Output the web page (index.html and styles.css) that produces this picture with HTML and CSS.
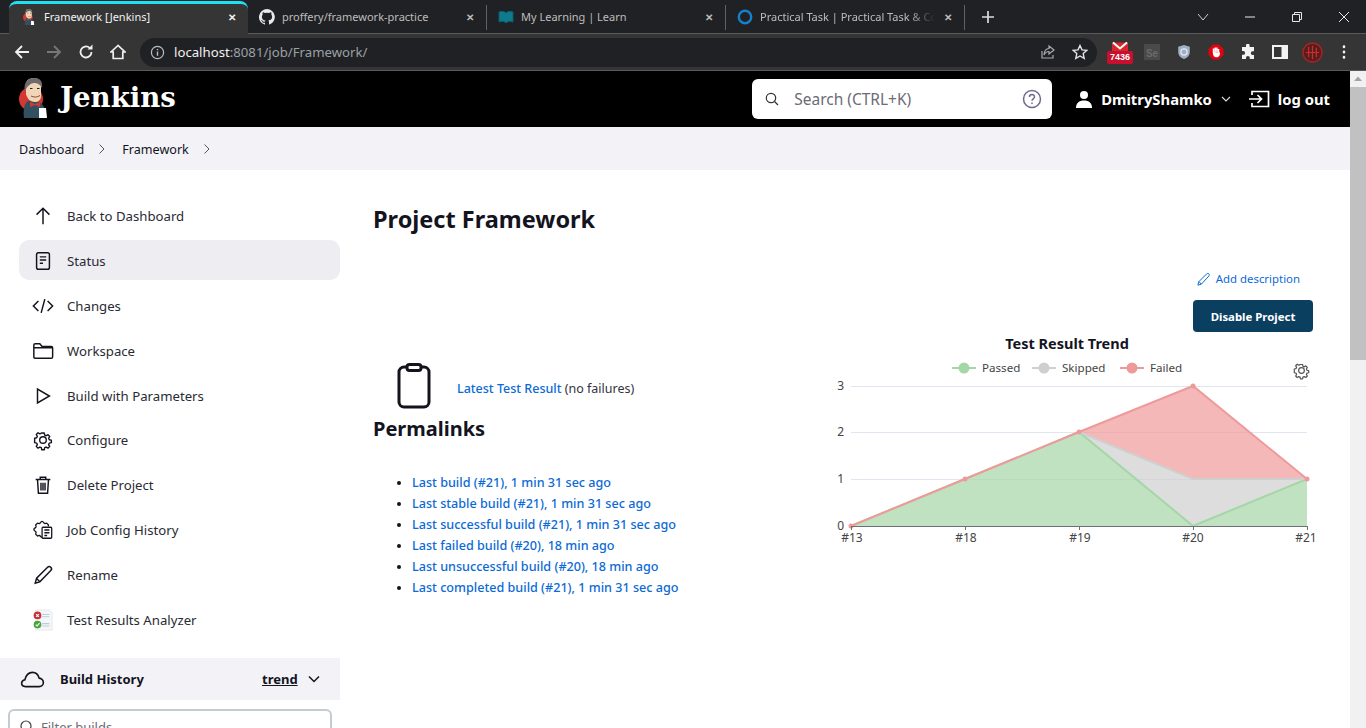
FILE: index.html
```html
<!DOCTYPE html>
<html lang="en">
<head>
    <meta charset="UTF-8">
    <meta name="viewport" content="width=device-width, initial-scale=1.0">
    <title>Framework [Jenkins]</title>
    <link rel="stylesheet" href="styles.css">
</head>
<body>
    <svg class="defs" width="0" height="0">
        <symbol id="butler" viewBox="0 0 30 40">
            <circle cx="12" cy="21" r="12" fill="#d33833"/>
            <path d="M5 40c-1-8 0-14 4-17l11 1c4 2 6 6 6 10l-4 2v4z" fill="#335061"/>
            <path d="M7 6c0-4 4-6 8-6s8 3 7 10v8c0 4-3 6-6 6-4 0-8-3-9-8z" fill="#f0d6b7"/>
            <path d="M6 13C4 5 9 0 15 0s9 3 8 10c-2-4-5-5-8-5S8 8 6 13z" fill="#6d6b6d"/>
            <path d="M11 10.500h2.500M18 10.500h2.500" stroke="#222" stroke-width="1.200"/>
            <path d="M12 18c3 1.500 6 1.500 9-.5" stroke="#8a4a3a" stroke-width="1" fill="none"/>
            <path d="M11 24l5 2 5-2v5l-5-2-5 2z" fill="#d33833"/>
            <path d="M20 30h7l1 10h-8z" fill="#fff"/>
        </symbol>
        <symbol id="gear" viewBox="0 0 24 24">
            <path d="M10.300 2.500h3.400l.6 2.800 2 .9 2.500-1.500 2.400 2.400-1.500 2.500.9 2 2.800.6v3.400l-2.800.6-.9 2 1.500 2.500-2.400 2.400-2.500-1.500-2 .9-.6 2.800h-3.400l-.6-2.800-2-.9-2.500 1.500-2.400-2.400 1.500-2.500-.9-2-2.800-.6V9.600l2.800-.6.9-2-1.500-2.500 2.400-2.400 2.500 1.500 2-.9z" transform="translate(2.400 2.400) scale(.8)" fill="none" stroke="currentColor" stroke-width="1.900" stroke-linejoin="round"/>
            <circle cx="12" cy="12" r="3.600" fill="none" stroke="currentColor" stroke-width="1.500"/>
        </symbol>
    </svg>

    <div class="tabstrip">
        <div class="tab tab-active">
            <svg class="favicon"><use href="#butler"/></svg>
            <span class="tab-title">Framework [Jenkins]</span>
            <span class="tab-close">&#10005;</span>
        </div>
        <div class="tab tab-sep">
            <svg class="favicon" viewBox="0 0 16 16"><path fill="#e8e8e8" d="M8 0a8 8 0 0 0-2.500 15.600c.4.1.5-.2.5-.4v-1.400c-2.200.5-2.700-1-2.700-1-.4-.9-.9-1.200-.9-1.200-.7-.5.1-.5.1-.5.8.1 1.200.8 1.200.8.7 1.200 1.900.9 2.300.7.1-.5.3-.9.5-1.100-1.800-.2-3.600-.9-3.600-4 0-.9.3-1.600.8-2.100-.1-.2-.4-1 .1-2.100 0 0 .7-.2 2.200.8a7.600 7.600 0 0 1 4 0c1.500-1 2.200-.8 2.200-.8.400 1.100.2 1.900.1 2.100.5.6.8 1.300.8 2.100 0 3.100-1.900 3.700-3.700 3.900.3.300.6.800.6 1.500v2.200c0 .2.100.5.600.4A8 8 0 0 0 8 0z"/></svg>
            <span class="tab-title">proffery/framework-practice</span>
            <span class="tab-close">&#10005;</span>
        </div>
        <div class="tab tab-sep">
            <svg class="favicon" viewBox="0 0 16 16"><path fill="#0e7a8c" stroke="#0b5f6e" d="M1 3c3-1 5-1 7 1 2-2 4-2 7-1v10c-3-1-5-1-7 1-2-2-4-2-7-1z"/></svg>
            <span class="tab-title">My Learning | Learn</span>
            <span class="tab-close">&#10005;</span>
        </div>
        <div class="tab tab-sep">
            <svg class="favicon" viewBox="0 0 16 16"><circle cx="8" cy="8" r="6.200" fill="none" stroke="#1680c8" stroke-width="2.400"/></svg>
            <span class="tab-title tab-fade">Practical Task | Practical Task &amp; Co</span>
            <span class="tab-close">&#10005;</span>
        </div>
        <svg class="new-tab" viewBox="0 0 14 14"><path d="M7 1v12M1 7h12" stroke="#dcdcdc" stroke-width="1.700"/></svg>
        <div class="win-controls">
            <svg viewBox="0 0 14 14"><path d="M2 4l5 6 5-6" fill="none" stroke="#cfcfcf"/></svg>
            <svg viewBox="0 0 14 14"><path d="M2 7h10" stroke="#e8e8e8"/></svg>
            <svg viewBox="0 0 14 14"><path d="M2.500 4.500h7v7h-7zM4.500 4.500v-2h7v7h-2" fill="none" stroke="#e8e8e8"/></svg>
            <svg viewBox="0 0 14 14"><path d="M2 2l10 10M12 2L2 12" stroke="#e8e8e8"/></svg>
        </div>
    </div>

    <div class="toolbar">
        <svg class="nav-icon" viewBox="0 0 16 16"><path d="M15 8H2M8 2L2 8l6 6" fill="none" stroke="#f0f0f0" stroke-width="1.800"/></svg>
        <svg class="nav-icon" viewBox="0 0 16 16"><path d="M1 8h13M8 2l6 6-6 6" fill="none" stroke="#777" stroke-width="1.800"/></svg>
        <svg class="nav-icon" viewBox="0 0 16 16"><path d="M13.500 8A5.500 5.500 0 1 1 11.700 3.900" fill="none" stroke="#f0f0f0" stroke-width="1.800"/><path d="M9.500 5.500h5v-5z" fill="#f0f0f0"/></svg>
        <svg class="nav-icon" viewBox="0 0 16 16"><path d="M8 1.500L1 8h2.200v6.500h9.600V8H15z" fill="none" stroke="#f0f0f0" stroke-width="1.700"/></svg>
        <div class="omnibox">
            <svg class="omni-info" viewBox="0 0 16 16"><circle cx="8" cy="8" r="6.500" fill="none" stroke="#bbb" stroke-width="1.300"/><path d="M8 7v4.500M8 4.300v1.400" stroke="#bbb" stroke-width="1.500"/></svg>
            <span class="url"><span class="url-host">localhost</span>:8081/job/Framework/</span>
            <svg class="omni-icon" viewBox="0 0 16 16"><path d="M2 7v7h11v-3M9 2l5 4-5 4V7.500C6 7.500 5 9 4 11c0-4 2-6.500 5-6.500z" fill="none" stroke="#aaa" stroke-width="1.200"/></svg>
            <svg class="omni-icon" viewBox="0 0 16 16"><path d="M8 1.500l2 4.400 4.700.5-3.500 3.200 1 4.700L8 12l-4.200 2.300 1-4.700-3.500-3.200 4.700-.5z" fill="none" stroke="#e4e4e4" stroke-width="1.400"/></svg>
        </div>
        <div class="extensions">
            <div class="ext ext-gmail">
                <svg viewBox="0 0 16 11"><path d="M0 0h16v11H0z" fill="#d8262c"/><path d="M1 0l7 6 7-6" fill="none" stroke="#fff" stroke-width="2"/></svg>
                <span class="gmail-count">7436</span>
            </div>
            <div class="ext"><span class="ext-se">Se</span></div>
            <div class="ext"><svg viewBox="0 0 16 18"><path d="M8 1l6.500 2v6c0 4-3 6.500-6.500 8-3.500-1.500-6.500-4-6.500-8V3z" fill="#9fb0c6"/><circle cx="8" cy="9" r="3.500" fill="none" stroke="#e4e9f0" stroke-width="1.400"/></svg></div>
            <div class="ext"><svg viewBox="0 0 16 16"><path d="M5 .5h6L15.500 5v6L11 15.500H5L.5 11V5z" fill="#e3000f"/><path d="M5.500 8V4.500M7.200 8V3.500M8.900 8V3.500M10.500 8.500V5M5.500 8c0 3 1.200 4.500 3 4.500s2.800-1.500 2.800-4" stroke="#fff" stroke-width="1.500" fill="#fff"/></svg></div>
            <div class="ext"><svg viewBox="0 0 16 16"><path d="M6 1.500a1.800 1.800 0 0 1 3.600 0V3H14v4.200h-1.300a1.900 1.900 0 0 0 0 3.800H14v4H9.800v-1.200a1.900 1.900 0 0 0-3.800 0V15H2v-4.200h1.200a1.900 1.900 0 0 0 0-3.800H2V3h4z" fill="#f2f2f2"/></svg></div>
            <div class="ext"><svg viewBox="0 0 16 16"><path d="M1 2h14v12H1z" fill="none" stroke="#f2f2f2" stroke-width="2"/><path d="M9.500 2H15v12H9.500z" fill="#f2f2f2"/></svg></div>
            <div class="ext"><svg class="ext-big" viewBox="0 0 22 22"><circle cx="11" cy="11" r="10" fill="#5c1c1c" stroke="#a82424" stroke-width="1.500"/><path d="M7 5v11M11 4v14M15 6v10M4 11h14" stroke="#c23030" stroke-width="1.300"/></svg></div>
            <div class="ext"><svg viewBox="0 0 16 16"><path d="M8 2.500v.5M8 7.700v.6M8 13v.5" stroke="#f2f2f2" stroke-width="2.600" stroke-linecap="round"/></svg></div>
        </div>
    </div>

    <div class="window">
        <div class="page">
            <header class="page-header">
                <a class="logo">
                    <svg class="logo-img"><use href="#butler"/></svg>
                    <span class="logo-text">Jenkins</span>
                </a>
                <div class="search">
                    <svg class="search-icon" viewBox="0 0 16 16"><circle cx="7" cy="7" r="4.700" fill="none" stroke="#333" stroke-width="1.200"/><path d="M10.500 10.500L14 14" stroke="#333" stroke-width="1.200"/></svg>
                    <span class="search-text">Search (CTRL+K)</span>
                    <svg class="search-help" viewBox="0 0 20 20"><circle cx="10" cy="10" r="8.500" fill="none" stroke="#6d6b8d" stroke-width="1.500"/><path d="M7.500 8c0-3.200 5-3.200 5-.2 0 2-2.500 2-2.500 4" fill="none" stroke="#6d6b8d" stroke-width="1.500"/><path d="M10 13.600v1.400" stroke="#6d6b8d" stroke-width="1.500"/></svg>
                </div>
                <svg class="user-icon" viewBox="0 0 18 18"><circle cx="9" cy="5" r="4" fill="#fff"/><path d="M1 18c0-5 3-7.500 8-7.500s8 2.500 8 7.500z" fill="#fff"/></svg>
                <span class="user-name">DmitryShamko</span>
                <svg class="user-caret" viewBox="0 0 10 6"><path d="M1 1l4 4 4-4" fill="none" stroke="#ddd" stroke-width="1.100"/></svg>
                <svg class="logout-icon" viewBox="0 0 22 18"><path d="M4 5V1.500h16.500v15H4V13M1 9h12M9.500 5l4 4-4 4" fill="none" stroke="#fff" stroke-width="1.700"/></svg>
                <span class="logout-text">log out</span>
            </header>

            <nav class="breadcrumbs">
                <span>Dashboard</span>
                <svg class="crumb-sep" viewBox="0 0 8 12"><path d="M1.500 1.500L6 6l-4.500 4.500" fill="none" stroke="#555" stroke-width="1"/></svg>
                <span>Framework</span>
                <svg class="crumb-sep" viewBox="0 0 8 12"><path d="M1.500 1.500L6 6l-4.500 4.500" fill="none" stroke="#555" stroke-width="1"/></svg>
            </nav>

            <div class="layout">
                <aside class="side">
                    <div class="tasks">
                        <a class="task">
                            <svg class="task-icon" viewBox="0 0 24 24"><path d="M12 21V4M5 10.500L12 3.500l7 7"/></svg>
                            Back to Dashboard
                        </a>
                        <a class="task task-active">
                            <svg class="task-icon" viewBox="0 0 24 24"><rect x="5" y="3" width="14" height="18" rx="2"/><path d="M8.500 7.500h7M8.500 11h7M8.500 14.500h3.500"/></svg>
                            Status
                        </a>
                        <a class="task">
                            <svg class="task-icon" viewBox="0 0 24 24"><path d="M7 6.500L1.500 12 7 17.500M17 6.500l5.500 5.500-5.500 5.500M14 4.500L10 19.500"/></svg>
                            Changes
                        </a>
                        <a class="task">
                            <svg class="task-icon" viewBox="0 0 24 24"><path d="M2 7V5.500C2 4.700 2.700 4 3.500 4h5l2.500 3h10c1 0 1.500.7 1.500 1.500v10c0 .9-.7 1.500-1.500 1.500h-17C2.700 20 2 19.400 2 18.500zM2 8.500h20.500"/></svg>
                            Workspace
                        </a>
                        <a class="task">
                            <svg class="task-icon" viewBox="0 0 24 24"><path d="M6 4.500v15L19 12z"/></svg>
                            Build with Parameters
                        </a>
                        <a class="task">
                            <svg class="task-icon task-gear"><use href="#gear"/></svg>
                            Configure
                        </a>
                        <a class="task">
                            <svg class="task-icon" viewBox="0 0 24 24"><path d="M4 6h16M9 6V3.500h6V6M6 6l1 15h10l1-15M9.800 9.500v8.500M12 9.500v8.500M14.200 9.500v8.500"/></svg>
                            Delete Project
                        </a>
                        <a class="task">
                            <svg class="task-icon task-gear-doc" viewBox="0 0 24 24"><path d="M11 20c-1.500 0-2-2-3-2l-2 .5-2-2 .5-2c0-1-2.500-1.500-2.500-3s2.500-2 2.500-3L4 6.500l2-2 2 .5c1 0 1.500-2.500 3-2.500S13 5 14 5l2-.5 2 2-.3 1.500"/><rect x="11" y="9" width="10.500" height="12" rx="1"/><path d="M13.500 12h5.500M13.500 15h5.500M13.500 18h3"/></svg>
                            Job Config History
                        </a>
                        <a class="task">
                            <svg class="task-icon" viewBox="0 0 24 24"><path d="M3.500 21l1.500-5.500L17 3.500c1-1 2.500-1 3.500 0s1 2.500 0 3.500L8.500 19.500zM5 15.500L8.500 19.500"/></svg>
                            Rename
                        </a>
                        <a class="task">
                            <svg class="task-img" viewBox="0 0 24 24">
                                <path d="M4 1h15l3 3v19H4z" fill="#f4f6f8" stroke="#dfe3e6" stroke-width=".8"/>
                                <path d="M11 6h8M11 8.500h8M11 16h8M11 18.500h8" stroke="#b9cde0" stroke-width="1.200"/>
                                <circle cx="6" cy="7" r="4.200" fill="#c8303a"/>
                                <path d="M4.500 5.500l3 3M7.500 5.500l-3 3" stroke="#fff" stroke-width="1.200"/>
                                <circle cx="6" cy="17" r="4.200" fill="#4aa43c"/>
                                <path d="M4 17l1.600 1.600L8.200 15.400" stroke="#fff" stroke-width="1.200" fill="none"/>
                            </svg>
                            Test Results Analyzer
                        </a>
                    </div>

                    <div class="history-head">
                        <svg class="cloud-icon" viewBox="0 0 26 18"><path d="M7 16.500H5.500C3 16.500 1.500 14.800 1.500 13s1.500-3.500 3.500-3.800C6 5 9 1.500 13 1.500c3.500 0 6 2.500 7 6 2.700.3 4.500 2.500 4.500 4.700 0 2.500-2 4.300-4.500 4.300z" fill="none" stroke="#14141f" stroke-width="1.700"/></svg>
                        <span class="history-title">Build History</span>
                        <span class="history-trend">trend</span>
                        <svg class="history-caret" viewBox="0 0 12 8"><path d="M1 1.500l5 5 5-5" fill="none" stroke="#14141f" stroke-width="1.500"/></svg>
                    </div>
                    <div class="filter">
                        <svg class="filter-icon" viewBox="0 0 16 16"><circle cx="7" cy="7" r="5" fill="none" stroke="#444" stroke-width="1.200"/></svg>
                        Filter builds...
                    </div>
                </aside>

                <main class="main">
                    <h1 class="title">Project Framework</h1>
                    <div class="actions">
                        <a class="add-desc">
                            <svg class="add-desc-icon" viewBox="0 0 24 24"><path d="M3 21l1.500-5.500L17 3c1-1 2.500-1 3.500 0s1 2.500 0 3.500L8.500 19.500zM5 15.500L8.500 19.500"/></svg>
                            Add description
                        </a>
                        <button class="btn-disable">Disable Project</button>
                    </div>
                    <div class="columns">
                        <div class="col-left">
                            <div class="latest">
                                <svg class="latest-icon" viewBox="0 0 34 46"><rect x="2" y="4" width="30" height="40" rx="5"/><rect x="10" y="1.500" width="14" height="6" rx="2.500" fill="#fff"/></svg>
                                <span class="latest-text"><a class="link">Latest Test Result</a> <span class="muted">(no failures)</span></span>
                            </div>
                            <h2 class="permalinks-title">Permalinks</h2>
                            <ul class="permalinks">
                                <li><a class="link">Last build (#21), 1 min 31 sec ago</a></li>
                                <li><a class="link">Last stable build (#21), 1 min 31 sec ago</a></li>
                                <li><a class="link">Last successful build (#21), 1 min 31 sec ago</a></li>
                                <li><a class="link">Last failed build (#20), 18 min ago</a></li>
                                <li><a class="link">Last unsuccessful build (#20), 18 min ago</a></li>
                                <li><a class="link">Last completed build (#21), 1 min 31 sec ago</a></li>
                            </ul>
                        </div>
                        <svg class="trend" viewBox="830 335 490 215">
                            <text class="trend-title" x="1067" y="349" text-anchor="middle">Test Result Trend</text>

                            <path class="legend-line" d="M952 368h24" stroke="#a5d6a7"/><circle cx="964" cy="368" r="5.500" fill="#a5d6a7"/>
                            <text class="legend" x="982" y="372">Passed</text>
                            <path class="legend-line" d="M1032 368h24" stroke="#cfcfcf"/><circle cx="1044" cy="368" r="5.500" fill="#cfcfcf"/>
                            <text class="legend" x="1062" y="372">Skipped</text>
                            <path class="legend-line" d="M1120 368h24" stroke="#ef9a9a"/><circle cx="1132" cy="368" r="5.500" fill="#ef9a9a"/>
                            <text class="legend" x="1150" y="372">Failed</text>

                            <use href="#gear" x="1292" y="361" width="19" height="19" class="trend-gear"/>

                            <path class="grid" d="M851 386.500h456M851 432.500h456M851 479.500h456"/>

                            <path d="M851 526L965 479 1079 432 1193 526 1307 479V526z" fill="#a5d6a7" fill-opacity=".7"/>
                            <path d="M1079 432L1193 479H1307L1193 526z" fill="#cfcfcf" fill-opacity=".7"/>
                            <path d="M1079 432L1193 386 1307 479H1193z" fill="#ef9a9a" fill-opacity=".7"/>

                            <path class="series" d="M851 526L965 479 1079 432 1193 526 1307 479" stroke="#a5d6a7"/>
                            <path class="series" d="M1079 432L1193 479H1307" stroke="#cfcfcf"/>
                            <path class="series" d="M851 526L965 479 1079 432 1193 386 1307 479" stroke="#ef9a9a"/>
                            <g fill="#ef9a9a">
                                <circle cx="851" cy="526" r="2.500"/><circle cx="965" cy="479" r="2.500"/><circle cx="1079" cy="432" r="2.500"/>
                                <circle cx="1193" cy="386" r="2.500"/><circle cx="1307" cy="479" r="2.500"/>
                            </g>

                            <path class="axis" d="M851 526.500h456M851.500 526v4M965.500 526v4M1079.500 526v4M1193.500 526v4M1307.500 526v4"/>

                            <text class="tick" x="844" y="390" text-anchor="end">3</text>
                            <text class="tick" x="844" y="436" text-anchor="end">2</text>
                            <text class="tick" x="844" y="483" text-anchor="end">1</text>
                            <text class="tick" x="844" y="530" text-anchor="end">0</text>
                            <text class="tick" x="852" y="542" text-anchor="middle">#13</text>
                            <text class="tick" x="966" y="542" text-anchor="middle">#18</text>
                            <text class="tick" x="1080" y="542" text-anchor="middle">#19</text>
                            <text class="tick" x="1193" y="542" text-anchor="middle">#20</text>
                            <text class="tick" x="1306" y="542" text-anchor="middle">#21</text>
                        </svg>
                    </div>
                </main>
            </div>
        </div>
        <div class="scrollbar">
            <svg class="scroll-arrow" viewBox="0 0 16 16"><path d="M8 5.500l4 4.500H4z" fill="#a3a3a3"/></svg>
            <div class="scroll-thumb"></div>
        </div>
    </div>
</body>
</html>
```

FILE: styles.css
```css
html, body {
    margin: 0;
    padding: 0;
    height: 728px;
    overflow: hidden;
}

body {
    font-family: "Noto Sans", "Open Sans", sans-serif;
    font-size: 14px;
    color: #14141f;
    background: #fff;
    display: flex;
    flex-direction: column;
}

.defs {
    position: absolute;
}

/* browser chrome */
.tabstrip {
    height: 33px;
    flex: none;
    background: #202124;
    display: flex;
    align-items: stretch;
    padding-left: 9px;
    border-bottom: 1px solid #5a5a5a;
    color: #bdbdbd;
    font-size: 11px;
    box-sizing: content-box;
}

.tab {
    width: 239px;
    box-sizing: border-box;
    display: flex;
    align-items: center;
    padding: 0 10px 0 12px;
    gap: 7px;
    position: relative;
}

.tab-active {
    background: #353535;
    color: #f2f2f2;
    margin-top: 1px;
    margin-bottom: -1px;
    border-top: 3px solid #1fe0f0;
    border-radius: 8px 8px 0 0;
    padding-bottom: 5px;
}

.tab-sep {
    border-right: 1px solid #5f6368;
    margin: 5px 0 3px;
    padding-left: 11px;
    padding-bottom: 2px;
}

.favicon {
    width: 16px;
    height: 16px;
    flex: none;
}

.tab-title {
    flex: 1;
    white-space: nowrap;
    overflow: hidden;
}

.tab-fade {
    -webkit-mask-image: linear-gradient(to right, #000 85%, transparent);
    mask-image: linear-gradient(to right, #000 85%, transparent);
}

.tab-close {
    font-size: 10px;
    font-weight: bold;
    width: 12px;
    text-align: center;
}

.new-tab {
    width: 14px;
    height: 14px;
    margin: 10px 0 0 16px;
}

.win-controls {
    margin-left: auto;
    display: flex;
    gap: 33px;
    padding: 10px 15px 0 0;
}

.win-controls svg {
    width: 14px;
    height: 14px;
}

.toolbar {
    height: 37px;
    flex: none;
    box-sizing: border-box;
    background: #353535;
    border-bottom: 1px solid #5a5a5a;
    display: flex;
    align-items: center;
    padding-left: 14px;
}

.nav-icon {
    width: 16px;
    height: 16px;
    margin-right: 16px;
}

.omnibox {
    width: 957px;
    height: 29px;
    margin-left: -2px;
    background: #202124;
    border-radius: 15px;
    display: flex;
    align-items: center;
    padding: 0 9px 0 10px;
    box-sizing: border-box;
    font-size: 13.200px;
    color: #9aa0a6;
}

.omni-info {
    width: 15px;
    height: 15px;
    margin-right: 9px;
}

.url {
    flex: 1;
}

.url-host {
    color: #f2f2f2;
}

.omni-icon {
    width: 16px;
    height: 16px;
    margin-left: 16px;
}

.extensions {
    display: flex;
    margin-left: 7px;
}

.ext {
    width: 32px;
    height: 24px;
    display: flex;
    align-items: center;
    justify-content: center;
    position: relative;
}

.ext svg {
    width: 16px;
    height: 16px;
}

.ext .ext-big {
    width: 21px;
    height: 21px;
}

.ext-gmail svg {
    margin-top: -9px;
}

.gmail-count {
    position: absolute;
    top: 11px;
    left: 3px;
    width: 26px;
    background: #c8102e;
    border-radius: 2px;
    color: #fff;
    font: bold 9px/13px "Liberation Sans", sans-serif;
    text-align: center;
}

.ext-se {
    width: 16px;
    height: 16px;
    background: #4a4a4a;
    color: #6a6a6a;
    font: bold 10px/20px "Liberation Sans", sans-serif;
    text-align: center;
}

/* page */
.window {
    flex: 1;
    display: flex;
    min-height: 0;
}

.page {
    flex: 1;
    min-width: 0;
    overflow: hidden;
}

.scrollbar {
    width: 16px;
    flex: none;
    background: #f1f1f1;
}

.scroll-arrow {
    display: block;
    width: 16px;
    height: 16px;
}

.scroll-thumb {
    height: 273px;
    background: #c1c1c1;
}

.page-header {
    height: 56px;
    background: #000;
    color: #fff;
    display: flex;
    align-items: center;
    padding: 0 20px 0 19px;
    font-size: 14.800px;
    font-weight: bold;
}

.logo {
    display: flex;
    align-items: center;
    gap: 11px;
    margin-top: -3px;
}

.logo-img {
    width: 30px;
    height: 40px;
}

.logo-text {
    font-family: "DejaVu Serif", serif;
    font-size: 27.600px;
}

.search {
    width: 300px;
    height: 40px;
    margin-left: auto;
    background: #fff;
    border-radius: 6px;
    display: flex;
    align-items: center;
    padding: 0 10px 0 12px;
    box-sizing: border-box;
    font-size: 15.500px;
    font-weight: normal;
    color: #6d6b75;
}

.search-icon {
    width: 16px;
    height: 16px;
}

.search-text {
    flex: 1;
    margin-left: 14px;
}

.search-help {
    width: 20px;
    height: 20px;
}

.user-icon {
    width: 18px;
    height: 18px;
    margin-left: 23px;
}

.user-name {
    margin-left: 8px;
}

.user-caret {
    width: 10px;
    height: 6px;
    margin-left: 9px;
}

.logout-icon {
    width: 22px;
    height: 18px;
    margin-left: 17px;
}

.logout-text {
    margin-left: 8px;
}

.breadcrumbs {
    height: 43px;
    box-sizing: border-box;
    padding-top: 1px;
    background: #f3f3f7;
    display: flex;
    align-items: center;
    padding-left: 19px;
    font-size: 12.600px;
}

.crumb-sep {
    width: 8px;
    height: 12px;
    margin: 0 16px 0 14px;
}

.layout {
    display: flex;
}

/* side panel */
.side {
    width: 340px;
    flex: none;
    padding-top: 25px;
}

.tasks {
    display: flex;
    flex-direction: column;
    gap: 4.900px;
    padding-left: 19px;
}

.task {
    height: 40px;
    box-sizing: border-box;
    padding-top: 2px;
    display: flex;
    align-items: center;
    padding-left: 13px;
    border-radius: 10px;
    font-size: 13.200px;
    color: #2a2a33;
}

.task-active {
    background: #ededf2;
}

.task-icon {
    width: 22px;
    height: 22px;
    margin-right: 13px;
    flex: none;
    fill: none;
    stroke: #14141f;
    stroke-width: 1.600;
    color: #14141f;
}

.task-gear {
    stroke: none;
}

.task-gear-doc {
    stroke-width: 1.400;
}

.task-img {
    width: 22px;
    height: 22px;
    margin-right: 13px;
    flex: none;
}

.history-head {
    height: 42px;
    margin-top: 19px;
    background: #f3f3f7;
    display: flex;
    align-items: center;
    padding-left: 20px;
    font-size: 13px;
    font-weight: bold;
}

.cloud-icon {
    width: 25px;
    height: 17px;
}

.history-title {
    margin-left: 15px;
    width: 202px;
}

.history-trend {
    text-decoration: underline;
}

.history-caret {
    width: 12px;
    height: 8px;
    margin-left: 10px;
}

.filter {
    height: 36px;
    margin: 9px 8px 0;
    box-sizing: border-box;
    border: 2px solid #c3ccd1;
    border-radius: 6px;
    display: flex;
    align-items: center;
    padding-left: 9px;
    gap: 6px;
    color: #6d6b75;
    font-size: 13px;
}

.filter-icon {
    width: 16px;
    height: 16px;
}

/* main column */
.main {
    flex: 1;
    min-width: 0;
    padding: 33px 30px 0 33px;
}

.title {
    margin: 0;
    font-size: 23.500px;
    line-height: 32px;
    font-weight: bold;
}

.actions {
    display: flex;
    flex-direction: column;
    align-items: flex-end;
    padding-right: 7px;
    margin-top: 31px;
}

.add-desc {
    display: flex;
    align-items: center;
    gap: 5px;
    font-size: 11.400px;
    line-height: 26px;
    color: #0b6ad6;
    margin-right: 13px;
}

.add-desc-icon {
    width: 15px;
    height: 15px;
    fill: none;
    stroke: #0b6ad6;
    stroke-width: 1.600;
}

.btn-disable {
    width: 120px;
    height: 32px;
    margin-top: 8px;
    border: none;
    border-radius: 4px;
    background: #0b3f60;
    color: #fff;
    font: bold 11.400px "Noto Sans", sans-serif;
}

.columns {
    display: flex;
    justify-content: space-between;
    margin-top: 3px;
}

.col-left {
    padding-top: 28px;
}

.latest {
    display: flex;
    align-items: center;
    font-size: 12.500px;
}

.latest-icon {
    width: 34px;
    height: 46px;
    margin: 0 26px 0 24px;
    fill: #fff;
    stroke: #14141f;
    stroke-width: 3;
}

.latest-text {
    padding-top: 5px;
}

.muted {
    color: #33333d;
}

.link {
    color: #0b6ad6;
    font-weight: 500;
}

.permalinks-title {
    margin: 4px 0 0;
    font-size: 20px;
    line-height: 32px;
    font-weight: bold;
}

.permalinks {
    margin: 27px 0 0;
    padding-left: 39px;
    font-size: 12.600px;
    line-height: 21px;
}

.trend {
    width: 490px;
    height: 215px;
    flex: none;
    overflow: visible;
}

.trend-title {
    font-size: 14.500px;
    font-weight: bold;
    fill: #14141f;
}

.legend {
    font-size: 11.600px;
    fill: #444;
}

.legend-line {
    stroke-width: 2;
}

.trend-gear {
    color: #555;
}

.grid {
    stroke: #e0e6f1;
    fill: none;
}

.series {
    fill: none;
    stroke-width: 2;
}

.axis {
    stroke: #6e7079;
    fill: none;
}

.tick {
    font-size: 12px;
    fill: #444;
}
```
